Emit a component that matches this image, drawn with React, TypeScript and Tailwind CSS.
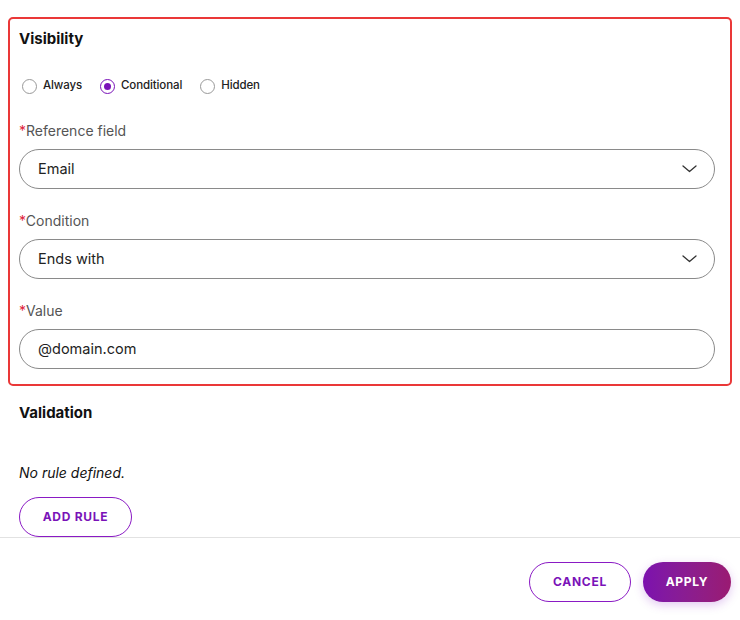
import React from "react";

function Chevron() {
  return (
    <svg width="15" height="8" viewBox="0 0 15 8" fill="none" className="text-[#333]">
      <path d="M1 1l6.5 5.5L14 1" stroke="currentColor" strokeWidth="1.3" strokeLinecap="round" strokeLinejoin="round" />
    </svg>
  );
}

function Radio({ label, checked }: { label: string; checked?: boolean }) {
  return (
    <label className="flex items-center gap-[6px]">
      <span
        className={
          checked
            ? "flex h-[15px] w-[15px] items-center justify-center rounded-full border border-[#7a12b8]"
            : "flex h-[15px] w-[15px] items-center justify-center rounded-full border border-[#999]"
        }
      >
        {checked && <span className="h-[7px] w-[7px] rounded-full bg-[#7a12b8]" />}
      </span>
      <span className="text-[11.5px] font-medium tracking-[-0.01em] text-[#222]">{label}</span>
    </label>
  );
}

function Field({ label, value, select }: { label: string; value: string; select?: boolean }) {
  return (
    <div className="flex flex-col gap-[8px]">
      <p className="h-[20px] text-[14px] leading-[20px] text-[#555]">
        <span className="text-[#e0243a]">*</span>
        {label}
      </p>
      <div className="flex h-[40px] items-center justify-between rounded-full border border-[#8a8a8a] pl-[18px] pr-[17px]">
        <span className="text-[14.5px] text-[#222]">{value}</span>
        {select && <Chevron />}
      </div>
    </div>
  );
}

export default function App() {
  return (
    <div className="flex h-[620px] w-[740px] flex-col bg-white font-['Inter',sans-serif]">
      <div className="px-[8px] pt-[17px]">
        <section className="flex flex-col rounded-[5px] border-2 border-[#ea3838] pb-[15px] pl-[9px] pr-[15px] pt-[10px]">
          <h2 className="h-[20px] text-[15px] font-bold leading-[20px] text-[#111]">Visibility</h2>
          <div className="mt-[27px] flex h-[20px] items-center gap-[18px] pl-[3px]">
            <Radio label="Always" />
            <Radio label="Conditional" checked />
            <Radio label="Hidden" />
          </div>
          <div className="mt-[25px] flex flex-col gap-[22px]">
            <Field label="Reference field" value="Email" select />
            <Field label="Condition" value="Ends with" select />
            <Field label="Value" value="@domain.com" />
          </div>
        </section>
      </div>

      <section className="flex flex-col px-[19px] pt-[17px]">
        <h2 className="h-[20px] text-[15px] font-bold leading-[20px] text-[#111]">Validation</h2>
        <p className="mt-[40px] h-[20px] text-[14px] italic leading-[20px] text-[#111]">No rule defined.</p>
        <button className="mt-[14px] h-[40px] w-[113px] rounded-full border border-[#8a1ac4] text-[12px] font-bold tracking-[0.06em] text-[#7a12b8]">
          ADD RULE
        </button>
      </section>

      <footer className="flex flex-1 items-start justify-end gap-[12px] border-t border-[#e2e2e2] pr-[9px] pt-[24px]">
        <button className="h-[40px] w-[102px] rounded-full border border-[#8a1ac4] text-[12px] font-bold tracking-[0.06em] text-[#7a12b8]">
          CANCEL
        </button>
        <button className="h-[40px] w-[88px] rounded-full bg-gradient-to-r from-[#7c10ae] to-[#9a1a72] text-[12px] font-bold tracking-[0.06em] text-white shadow-[0_3px_10px_rgba(140,40,200,0.25)]">
          APPLY
        </button>
      </footer>
    </div>
  );
}
